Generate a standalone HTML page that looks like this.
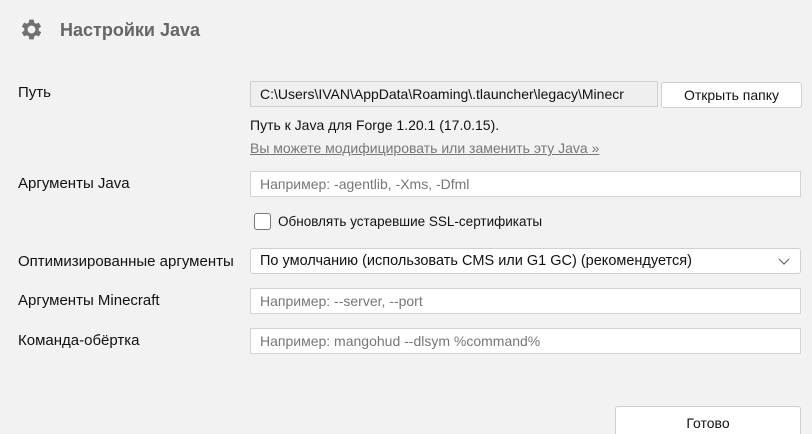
<!DOCTYPE html>
<html style="height:434px;overflow:hidden"><head><meta charset="utf-8"><style>
body{margin:0;width:812px;height:434px;background:#f2f2f2;font-family:"Liberation Sans","Noto Sans CJK SC",sans-serif;font-size:14px;color:#111;position:relative;overflow:hidden}
.a{position:absolute;white-space:nowrap}
.lbl{left:18px;font-size:15px}
.inp{position:absolute;left:250px;width:549px;height:24px;background:#fff;border:1px solid #d4d4d4;box-sizing:content-box;line-height:24px;padding-left:0}
.inp span{position:absolute;left:9px;color:#777}
.btn{position:absolute;background:#fff;border:1px solid #cfcfcf;border-radius:3px;text-align:center}
</style></head><body>
<svg class="a" style="left:18px;top:16px" width="27" height="27" viewBox="0 0 24 24"><path fill="#707070" d="M19.4 13a7.5 7.5 0 000-2l2.1-1.6-2-3.5-2.5 1a7.4 7.4 0 00-1.7-1L15 3.2h-4l-.4 2.7a7.4 7.4 0 00-1.7 1l-2.5-1-2 3.5L6.6 11a7.5 7.5 0 000 2l-2.2 1.6 2 3.5 2.5-1a7.4 7.4 0 001.7 1l.4 2.7h4l.4-2.7a7.4 7.4 0 001.7-1l2.5 1 2-3.5zM13 15.5a3.5 3.5 0 110-7 3.5 3.5 0 010 7z" transform="translate(-1 0)"/></svg>
<div class="a" style="left:60px;top:20px;font-size:18px;font-weight:bold;color:#666">Настройки Java</div>

<div class="a lbl" style="top:84px">Путь</div>
<div class="inp" style="top:81px;width:406px;background:#efefef;border-color:#cfcfcf"><span style="color:#111">C:\Users\IVAN\AppData\Roaming\.tlauncher\legacy\Minecr</span></div>
<div class="btn" style="left:661px;top:82px;width:139px;height:24px;line-height:24px">Открыть папку</div>
<div class="a" style="left:250px;top:117px">Путь к Java для Forge 1.20.1 (17.0.15).</div>
<div class="a" style="left:250px;top:140px;color:#777;text-decoration:underline">Вы можете модифицировать или заменить эту Java »</div>

<div class="a lbl" style="top:175px">Аргументы Java</div>
<div class="inp" style="top:171px"><span>Например: -agentlib, -Xms, -Dfml</span></div>
<div class="a" style="left:254px;top:213px;width:15px;height:15px;background:#fff;border:1px solid #777;border-radius:3px"></div>
<div class="a" style="left:278px;top:214px;font-size:13.5px">Обновлять устаревшие SSL-сертификаты</div>

<div class="a lbl" style="top:253px">Оптимизированные аргументы</div>
<div class="inp" style="top:248px;border-radius:3px;border-color:#d0d0d0"><span style="color:#111;font-size:14.5px">По умолчанию (использовать CMS или G1 GC) (рекомендуется)</span>
<svg style="position:absolute;right:10px;top:9px" width="12" height="7" viewBox="0 0 12 7"><path d="M1 1l5 5 5-5" fill="none" stroke="#666" stroke-width="1.2"/></svg></div>

<div class="a lbl" style="top:292px">Аргументы Minecraft</div>
<div class="inp" style="top:288px"><span>Например: --server, --port</span></div>

<div class="a lbl" style="top:332px">Команда-обёртка</div>
<div class="inp" style="top:328px"><span>Например: mangohud --dlsym %command%</span></div>

<div class="btn" style="left:615px;top:406px;width:184px;height:34px;line-height:32px">Готово</div>
</body></html>
